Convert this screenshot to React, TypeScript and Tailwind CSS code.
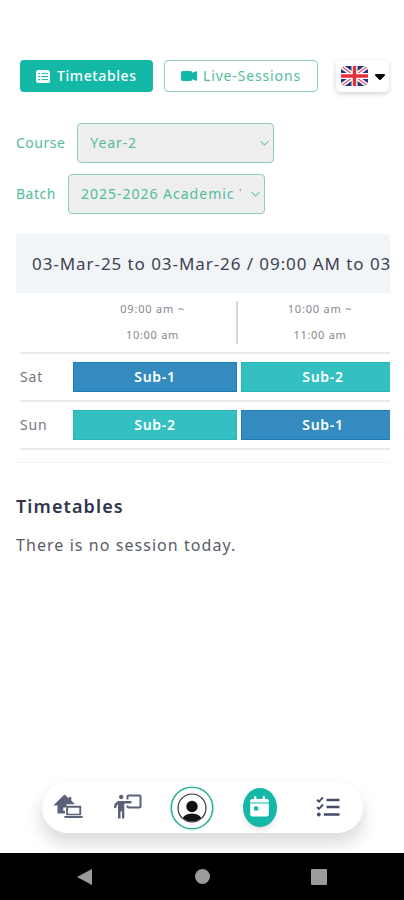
import { FaCaretDown } from 'react-icons/fa6'
import { BsCameraVideoFill } from 'react-icons/bs'

interface SelectBoxProps {
  label: string
  value: string
  valueClass: string
}

interface Day {
  name: string
  subjects: string[]
}

const slots = [
  ['09:00 am ~', '10:00 am'],
  ['10:00 am ~', '11:00 am'],
]

const days: Day[] = [
  { name: 'Sat', subjects: ['Sub-1', 'Sub-2'] },
  { name: 'Sun', subjects: ['Sub-2', 'Sub-1'] },
]

const subjectColors: Record<string, string> = {
  'Sub-1': 'bg-[#338bc0] border-[#1d7cb8]',
  'Sub-2': 'bg-[#34bfc0] border-[#22b8b8]',
}

function TableIcon() {
  return (
    <svg width="14" height="13" viewBox="0 0 14 13" fill="none">
      <rect width="14" height="13" rx="2.5" fill="#fff" />
      <path d="M2.2 3.4h2M2.2 6.5h2M2.2 9.6h2M5.6 3.4h6.6M5.6 6.5h6.6M5.6 9.6h6.6" stroke="#14b8a6" strokeWidth="1" />
    </svg>
  )
}

function Flag() {
  return (
    <svg width="27" height="20" viewBox="0 0 27 20">
      <defs>
        <clipPath id="flag">
          <rect width="27" height="20" rx="5" />
        </clipPath>
      </defs>
      <g clipPath="url(#flag)">
        <rect width="27" height="20" fill="#29337a" />
        <path d="M0 0L27 20M27 0L0 20" stroke="#fff" strokeWidth="4.4" />
        <path d="M0 0L27 20M27 0L0 20" stroke="#e0566a" strokeWidth="1.3" />
        <path d="M13.5 0V20M0 10H27" stroke="#fff" strokeWidth="6" />
        <path d="M13.5 0V20M0 10H27" stroke="#e5303c" strokeWidth="3.4" />
      </g>
    </svg>
  )
}

function HouseLaptopIcon() {
  return (
    <svg width="30" height="25" viewBox="0 0 30 25" fill="#5b6178">
      <path d="M11.500 0.500L16 4.500V3h2.300v3.500L22 10.300H13.500v3.200H10.300v3.500h1.700v2.500H4.500V11.500H0.300z" />
      <path d="M13.200 11.800h15v9.500h-15zM15.100 13.700v6h11.200v-6z" fillRule="evenodd" />
      <path d="M11.200 22h18.600v.6a1.400 1.400 0 0 1-1.400 1.400H12.600a1.400 1.400 0 0 1-1.400-1.400z" />
    </svg>
  )
}

function TeacherIcon() {
  return (
    <svg width="28" height="26" viewBox="0 0 28 26" fill="none" stroke="#5b6178">
      <circle cx="7.200" cy="3" r="2.200" fill="#5b6178" stroke="none" />
      <path d="M4 7h6.300v17.500H8v-7H6.500v7H4z" fill="#5b6178" stroke="none" />
      <path d="M4.800 8L2 10.200 1.200 13M9 8.300h7.500" strokeWidth="2.500" strokeLinecap="round" />
      <path d="M13.500 5.500V2.600a1 1 0 0 1 1-1h11a1 1 0 0 1 1 1v10a1 1 0 0 1-1 1h-11a1 1 0 0 1-1-1V11.500" strokeWidth="2" />
    </svg>
  )
}

function ChecklistIcon() {
  return (
    <svg width="24" height="22" viewBox="0 0 24 22" fill="none" stroke="#454d68">
      <path d="M1 3.800l2 1.900 4-4.400M1 11l2 1.900 4-4.400" strokeWidth="1.900" />
      <path d="M10.500 4H23.500M10.500 11H23.500M7.800 18.500H23.500" strokeWidth="2.300" />
      <circle cx="2.800" cy="18.500" r="1.900" fill="#454d68" stroke="none" />
    </svg>
  )
}

function SelectBox({ label, value, valueClass }: SelectBoxProps) {
  return (
    <label className="flex items-center text-sm text-[#52bd9c]">
      <span className="mr-3 tracking-[0.5px]">{label}</span>
      <span className="flex h-10 w-[197px] items-center rounded-[4px] border border-[#8fcdb9] bg-[#eeeeee] pl-3 pr-[3px]">
        <span className={`w-[160px] overflow-hidden whitespace-nowrap ${valueClass}`}>{value}</span>
        <svg className="ml-auto" width="11" height="7" viewBox="0 0 11 7" fill="none" stroke="#78c6ae" strokeWidth="1.1">
          <path d="M1.500 1.200L5.500 5l4-3.800" />
        </svg>
      </span>
    </label>
  )
}

function BottomNav() {
  return (
    <nav className="mx-auto flex h-[51px] w-[321px] items-center rounded-[26px] bg-white shadow-[0_10px_16px_2px_rgba(0,0,0,0.13)]">
      <button className="ml-[11px] pb-[2px]">
        <HouseLaptopIcon />
      </button>
      <button className="ml-[31px] pb-[2px]">
        <TeacherIcon />
      </button>
      <button className="ml-[28px]">
        <svg width="44" height="44" viewBox="0 0 44 44" fill="none">
          <clipPath id="avatar">
            <circle cx="22" cy="22" r="13.500" />
          </clipPath>
          <circle cx="22" cy="22" r="20.800" stroke="#2bb39d" strokeWidth="1.600" />
          <circle cx="22" cy="22" r="14" stroke="#333" strokeWidth="1.200" />
          <g clipPath="url(#avatar)" fill="#111">
            <circle cx="22" cy="20.500" r="5.700" />
            <ellipse cx="22" cy="34.300" rx="10" ry="6.800" />
          </g>
        </svg>
      </button>
      <button className="ml-[29px] flex h-[39px] w-[34px] items-center justify-center rounded-[50%] bg-[#14b8a6] pb-[2px] shadow-md">
        <svg width="19" height="21" viewBox="0 0 19 21" fill="#fff">
          <path d="M2 3h2V1.200a1 1 0 0 1 2.400 0V3h6.200V1.200a1 1 0 0 1 2.400 0V3h2a1.800 1.800 0 0 1 1.800 1.800V6.500H.2V4.800A1.800 1.800 0 0 1 2 3z" />
          <path d="M.2 7.600h18.600v11A1.800 1.800 0 0 1 17 20.400H2A1.800 1.800 0 0 1 .2 18.600zM4 10.500v4h4.200v-4z" fillRule="evenodd" />
        </svg>
      </button>
      <button className="ml-[39px] pb-[2px]">
        <ChecklistIcon />
      </button>
    </nav>
  )
}

export default function App() {
  return (
    <div className="flex h-[900px] w-[404px] flex-col overflow-hidden bg-white font-['Noto_Sans',sans-serif]">
      <header className="flex pl-5 pt-[60px]">
        <button className="flex h-8 w-[133px] items-center rounded-[4px] bg-[#14b8a6] pl-4 text-sm font-medium text-white">
          <TableIcon />
          <span className="ml-[7px] tracking-[0.6px]">Timetables</span>
        </button>
        <button className="ml-[11px] flex h-8 w-[154px] items-center rounded-[4px] border border-[#8fcdb9] pl-4 text-sm text-[#52bd9c]">
          <BsCameraVideoFill className="h-[16px] w-[16px] text-[#14b8a6]" />
          <span className="ml-[6px] whitespace-nowrap tracking-[0.85px]">Live-Sessions</span>
        </button>
        <button className="ml-[18px] flex h-8 w-[53px] items-center rounded-[5px] bg-white pl-[5px] shadow-[0_2px_5px_rgba(0,0,0,0.18)]">
          <Flag />
          <FaCaretDown className="ml-[4px] h-[16px] w-[16px] text-black" />
        </button>
      </header>

      <main className="pl-4 pr-[14px]">
        <div className="mt-[31px] flex flex-col gap-[11px]">
          <SelectBox label="Course" value="Year-2" valueClass="tracking-[0.9px]" />
          <SelectBox label="Batch" value="2025-2026 Academic Year" valueClass="tracking-[1px]" />
        </div>

        <section className="mt-[20px] overflow-hidden border-b border-[#f1f3f4] pb-3">
          <h2 className="h-[59px] overflow-hidden whitespace-nowrap bg-[#f2f5f7] pl-4 text-[17px] leading-[59px] tracking-[0.93px] text-[#3d4253]">
            03-Mar-25 to 03-Mar-26 / 09:00 AM to 03:00 PM
          </h2>
          <div className="ml-1 flex h-[61px] border-b-2 border-[#e8eaeb] pt-2">
            <div className="w-[51px] shrink-0" />
            {slots.map((slot, i) => (
              <div
                key={i}
                className={`flex h-[43px] shrink-0 flex-col items-center text-[11px] leading-[16px] tracking-[0.8px] text-[#85888e] ${
                  i === 0 ? 'w-[167px] border-r-2 border-[#d6d8da] pr-[2px]' : 'w-[164px]'
                }`}
              >
                <span>{slot[0]}</span>
                <span className="mt-[10px] tracking-[0.7px]">{slot[1]}</span>
              </div>
            ))}
          </div>
          {days.map((day) => (
            <div key={day.name} className="ml-1 flex h-12 items-center gap-1 border-b-2 border-[#e8eaeb]">
              <span className="w-[49px] shrink-0 text-sm tracking-[0.8px] text-[#74777e]">{day.name}</span>
              {day.subjects.map((subject) => (
                <span
                  key={subject}
                  className={`flex h-[30px] w-[164px] shrink-0 items-center justify-center border text-sm font-semibold tracking-[0.7px] text-white ${subjectColors[subject]}`}
                >
                  {subject}
                </span>
              ))}
            </div>
          ))}
        </section>

        <h3 className="mt-[29px] text-lg font-semibold leading-7 tracking-[1.1px] text-[#30354b]">Timetables</h3>
        <p className="mt-[13px] text-base leading-6 tracking-[1.06px] text-[#595d68]">There is no session today.</p>
      </main>

      <div className="mt-auto pb-[20px]">
        <BottomNav />
      </div>
      <div className="flex h-[47px] shrink-0 items-center bg-black">
        <svg className="ml-[77px]" width="15" height="16" viewBox="0 0 15 16" fill="#9b9b9b">
          <path d="M0 8L15 0v16z" />
        </svg>
        <span className="ml-[103px] h-[15px] w-[15px] rounded-full bg-[#9b9b9b]" />
        <span className="ml-[101px] h-4 w-4 rounded-[1px] bg-[#9b9b9b]" />
      </div>
    </div>
  )
}
